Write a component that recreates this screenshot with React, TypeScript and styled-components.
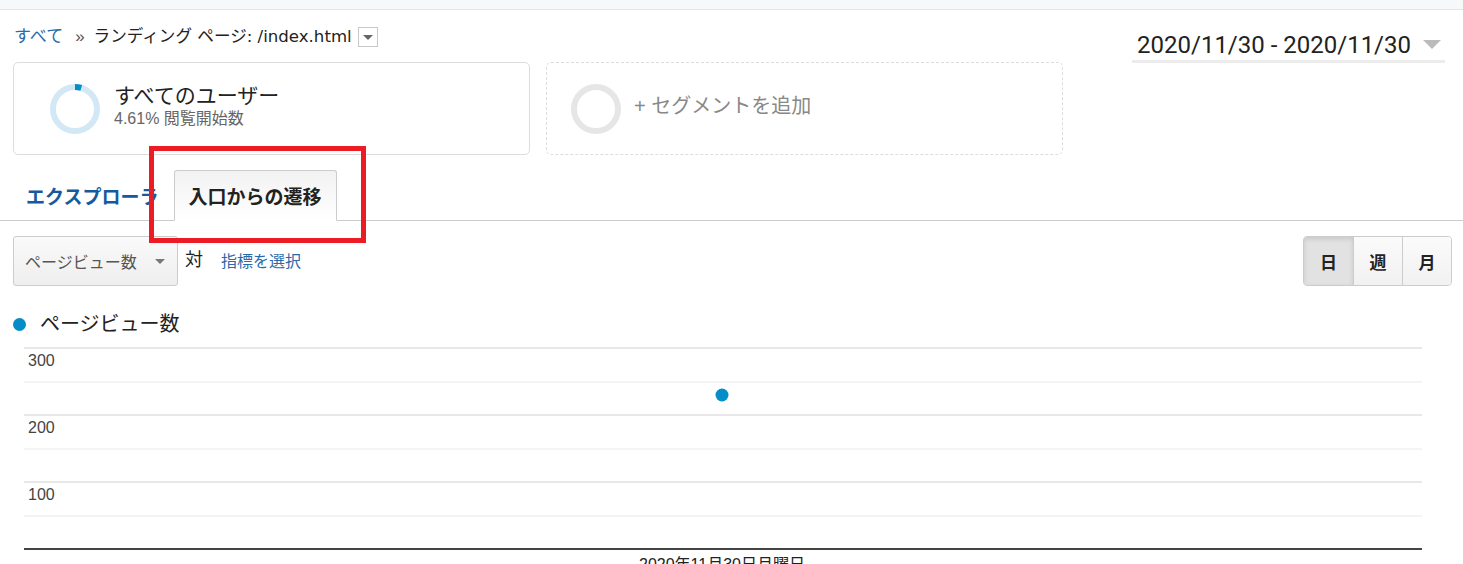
import { createGlobalStyle, styled } from "styled-components";

const GlobalStyle = createGlobalStyle`
  html, body {
    margin: 0;
    padding: 0;
    background: #ffffff;
  }
  body {
    font-family: "Liberation Sans", "Noto Sans CJK JP", sans-serif;
    color: #222222;
    overflow: hidden;
  }
  * {
    box-sizing: border-box;
  }
`;

type RingProps = {
  percent: number;
  track: string;
  fill?: string;
};

const Ring = ({ percent, track, fill }: RingProps): JSX.Element => {
  const r = 22;
  const c = 2 * Math.PI * r;
  return (
    <svg width="50" height="50" viewBox="0 0 50 50">
      <circle cx="25" cy="25" r={r} fill="none" stroke={track} strokeWidth="6" />
      {fill && (
        <circle
          cx="25"
          cy="25"
          r={r}
          fill="none"
          stroke={fill}
          strokeWidth="6"
          strokeDasharray={`${(c * percent) / 100} ${c}`}
          transform="rotate(-90 25 25)"
        />
      )}
    </svg>
  );
};

const Caret = ({ color, size }: { color: string; size: number }): JSX.Element => (
  <svg width={size} height={size / 2} viewBox="0 0 10 5">
    <path d="M0 0 L10 0 L5 5 Z" fill={color} />
  </svg>
);

// grid lines of the chart: y position, major or not
const gridLines = [
  { y: 1, major: true, label: "300" },
  { y: 35, major: false },
  { y: 68, major: true, label: "200" },
  { y: 102, major: false },
  { y: 135, major: true, label: "100" },
  { y: 169, major: false },
];

const Chart = (): JSX.Element => (
  <svg width="1398" height="226" viewBox="0 0 1398 226">
    {gridLines.map((g) => (
      <line
        key={g.y}
        x1="0"
        x2="1398"
        y1={g.y}
        y2={g.y}
        stroke={g.major ? "#e8e8e8" : "#f4f4f4"}
        strokeWidth="2"
      />
    ))}
    {gridLines
      .filter((g) => g.label)
      .map((g) => (
        <text
          key={g.label}
          x="4"
          y={g.y + 18}
          fontSize="16"
          fill="#444444"
          fontFamily='"Liberation Sans", sans-serif'
        >
          {g.label}
        </text>
      ))}
    <line x1="0" x2="1398" y1="202" y2="202" stroke="#444444" strokeWidth="2" />
    <circle cx="698" cy="48" r="6.5" fill="#058dc7" />
    <text
      x="698"
      y="223"
      fontSize="16"
      textAnchor="middle"
      fill="#222222"
      fontFamily='"Liberation Sans", "Noto Sans CJK JP", sans-serif'
    >
      2020年11月30日月曜日
    </text>
  </svg>
);

const App = (): JSX.Element => {
  return (
    <Page>
      <GlobalStyle />
      <TopStrip />
      <Header>
        <HeaderLeft>
          <Breadcrumb>
            <CrumbLink>すべて</CrumbLink>
            <CrumbSep>»</CrumbSep>
            <CrumbCurrent>ランディング ページ: /index.html</CrumbCurrent>
            <CrumbToggle>
              <Caret color="#666666" size={10} />
            </CrumbToggle>
          </Breadcrumb>
          <Segments>
            <SegmentCard>
              <RingSlot $left={36}>
                <Ring percent={4.61} track="#d2e8f5" fill="#058dc7" />
              </RingSlot>
              <SegmentText>
                <SegmentName>すべてのユーザー</SegmentName>
                <SegmentMeta>4.61% 閲覧開始数</SegmentMeta>
              </SegmentText>
            </SegmentCard>
            <SegmentCard $dashed>
              <RingSlot $left={24}>
                <Ring percent={0} track="#e6e6e6" />
              </RingSlot>
              <AddSegment>+ セグメントを追加</AddSegment>
            </SegmentCard>
          </Segments>
        </HeaderLeft>
        <DateRange>
          <span>2020/11/30 - 2020/11/30</span>
          <Caret color="#bbbbbb" size={18} />
        </DateRange>
      </Header>

      <Tabs>
        <Tab>エクスプローラ</Tab>
        <Tab $active>入口からの遷移</Tab>
      </Tabs>

      <Controls>
        <MetricGroup>
          <MetricSelect>
            <span>ページビュー数</span>
            <Caret color="#777777" size={10} />
          </MetricSelect>
          <Versus>対</Versus>
          <MetricLink>指標を選択</MetricLink>
        </MetricGroup>
        <PeriodGroup>
          <PeriodButton $active>日</PeriodButton>
          <PeriodButton>週</PeriodButton>
          <PeriodButton>月</PeriodButton>
        </PeriodGroup>
      </Controls>

      <Legend>
        <LegendDot />
        <span>ページビュー数</span>
      </Legend>

      <ChartArea>
        <Chart />
      </ChartArea>

      <Highlight />
    </Page>
  );
};

export default App;

const Page = styled.div`
  position: relative;
  width: 1463px;
  height: 564px;
  overflow: hidden;
  background: #ffffff;
`;

const TopStrip = styled.div`
  height: 10px;
  background: #f7f8fa;
  border-bottom: 1px solid #e3e5e8;
`;

const Header = styled.div`
  display: flex;
  justify-content: space-between;
  align-items: flex-start;
  padding: 0 18px 0 13px;
`;

const HeaderLeft = styled.div`
  display: flex;
  flex-direction: column;
`;

const Breadcrumb = styled.div`
  display: flex;
  align-items: center;
  height: 20px;
  margin-top: 17px;
  font-size: 17px;
  line-height: 20px;
`;

const CrumbLink = styled.span`
  color: #2b6aa8;
  padding-left: 1px;
`;

const CrumbSep = styled.span`
  color: #555555;
  margin: 0 9px 0 12px;
`;

const CrumbCurrent = styled.span`
  font-family: "DejaVu Sans", "Noto Sans CJK JP", sans-serif;
  font-size: 16.6px;
  color: #222222;
`;

const CrumbToggle = styled.span`
  display: flex;
  align-items: center;
  justify-content: center;
  width: 20px;
  height: 20px;
  margin-left: 6px;
  border: 1px solid #c8c8c8;
  background: #ffffff;
`;

const Segments = styled.div`
  display: flex;
  gap: 16px;
  margin-top: 15px;
`;

const SegmentCard = styled.div<{ $dashed?: boolean }>`
  display: flex;
  align-items: center;
  width: 517px;
  height: 93px;
  border: 1px ${(p) => (p.$dashed ? "dashed" : "solid")} #dddddd;
  border-radius: 5px;
`;

const RingSlot = styled.div<{ $left: number }>`
  display: flex;
  margin-left: ${(p) => p.$left}px;
  margin-right: 13px;
`;

const SegmentText = styled.div`
  display: flex;
  flex-direction: column;
  margin-top: -4px;
  margin-left: 1px;
`;

const SegmentName = styled.div`
  font-size: 21px;
  line-height: 24px;
  color: #222222;
`;

const SegmentMeta = styled.div`
  font-size: 16px;
  line-height: 22px;
  color: #666666;
`;

const AddSegment = styled.div`
  font-size: 20px;
  line-height: 24px;
  color: #888888;
  margin-top: -6px;
`;

const DateRange = styled.div`
  display: flex;
  align-items: center;
  gap: 12px;
  margin-top: 19px;
  padding: 0 4px 0 5px;
  height: 34px;
  border-bottom: 3px solid #ececec;
  font-family: Roboto, "Liberation Sans", sans-serif;
  font-size: 24px;
  line-height: 30px;
  color: #222222;
`;

const Tabs = styled.div`
  display: flex;
  align-items: flex-end;
  gap: 2px;
  height: 51px;
  margin-top: 15px;
  padding-left: 12px;
  border-bottom: 1px solid #cccccc;
`;

const Tab = styled.div<{ $active?: boolean }>`
  display: flex;
  align-items: center;
  height: 51px;
  padding: ${(p) => (p.$active ? "0 15px 0 13px" : "0 13px")};
  margin-bottom: -1px;
  font-size: 19px;
  font-weight: 700;
  color: ${(p) => (p.$active ? "#222222" : "#155a9c")};
  border: 1px solid ${(p) => (p.$active ? "#cccccc" : "transparent")};
  border-bottom: ${(p) => (p.$active ? "1px solid #ffffff" : "1px solid transparent")};
  border-radius: 3px 3px 0 0;
  background: ${(p) => (p.$active ? "linear-gradient(#f2f2f2, #ffffff)" : "transparent")};
`;

const Controls = styled.div`
  display: flex;
  justify-content: space-between;
  align-items: flex-start;
  margin-top: 15px;
  padding: 0 11px 0 13px;
`;

const MetricGroup = styled.div`
  display: flex;
  align-items: center;
`;

const MetricSelect = styled.div`
  display: flex;
  align-items: center;
  justify-content: space-between;
  width: 165px;
  height: 50px;
  padding: 0 12px 0 11px;
  border: 1px solid #cccccc;
  border-radius: 3px;
  background: linear-gradient(#fafafa, #eeeeee);
  font-size: 16px;
  color: #555555;
`;

const Versus = styled.span`
  align-self: flex-start;
  margin: 9px 0 0 7px;
  font-size: 18px;
  color: #222222;
`;

const MetricLink = styled.span`
  margin-left: 18px;
  margin-top: -2px;
  font-size: 16px;
  color: #2b6aa8;
`;

const PeriodGroup = styled.div`
  display: flex;
  border: 1px solid #cccccc;
  border-radius: 4px;
  overflow: hidden;
`;

const PeriodButton = styled.div<{ $active?: boolean }>`
  display: flex;
  align-items: center;
  justify-content: center;
  width: 49px;
  height: 48px;
  font-size: 17px;
  font-weight: 700;
  color: #222222;
  background: ${(p) => (p.$active ? "#e2e2e2" : "linear-gradient(#fbfbfb, #f1f1f1)")};
  box-shadow: ${(p) => (p.$active ? "inset 0 2px 5px rgba(0, 0, 0, 0.12)" : "none")};

  & + & {
    border-left: 1px solid #cccccc;
  }
`;

const Legend = styled.div`
  display: flex;
  align-items: center;
  gap: 14px;
  margin-top: 24px;
  padding-left: 13px;
  font-size: 20px;
  line-height: 28px;
  color: #222222;
`;

const LegendDot = styled.span`
  width: 13px;
  height: 13px;
  border-radius: 50%;
  background: #058dc7;
`;

const ChartArea = styled.div`
  margin-top: 9px;
  padding-left: 24px;
`;

const Highlight = styled.div`
  position: absolute;
  left: 149px;
  top: 146px;
  width: 217px;
  height: 97px;
  border: 5px solid #ec1c24;
  pointer-events: none;
`;
